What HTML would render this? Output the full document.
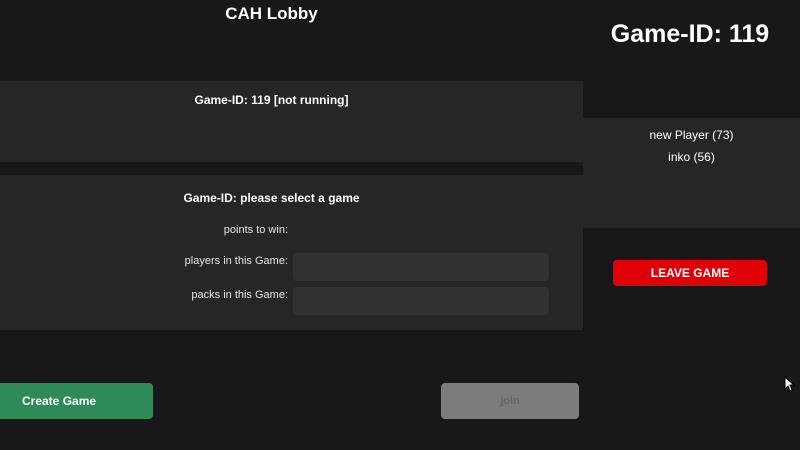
<!DOCTYPE html>
<html><head><meta charset="utf-8"><style>
*{margin:0;padding:0;box-sizing:border-box}
body{width:800px;height:450px;background:#18171a;font-family:"Liberation Sans",sans-serif;color:#fff;position:relative;overflow:hidden}
.a{position:absolute}
.p{background:#262528}
.lbl{position:absolute;font-size:11px;color:#e6e6e6;text-align:right;width:200px}
.in{position:absolute;left:293px;width:256px;height:28px;background:#323134;border-radius:4px}
</style></head><body>
<div class="a" style="left:0;width:543px;top:4px;text-align:center;font-weight:bold;font-size:17px">CAH Lobby</div>
<div class="a" style="left:580px;width:220px;top:20px;text-align:center;font-weight:bold;font-size:25px">Game-ID: 119</div>
<div class="a p" style="left:0;top:81px;width:583px;height:81px"></div>
<div class="a" style="left:0;width:543px;top:93px;text-align:center;font-weight:bold;font-size:12px">Game-ID: 119 [not running]</div>
<div class="a p" style="left:0;top:175px;width:583px;height:155px"></div>
<div class="a" style="left:0;width:543px;top:191px;text-align:center;font-weight:bold;font-size:12px">Game-ID: please select a game</div>
<div class="lbl" style="left:88px;top:224px">points to win:</div>
<div class="lbl" style="left:88px;top:255px">players in this Game:</div>
<div class="lbl" style="left:88px;top:289px">packs in this Game:</div>
<div class="in" style="top:253px"></div>
<div class="in" style="top:287px"></div>
<div class="a p" style="left:583px;top:118px;width:217px;height:110px"></div>
<div class="a" style="left:583px;width:217px;top:124px;text-align:center;font-size:12px;line-height:22px">new Player (73)<br>inko (56)</div>
<div class="a" style="left:613px;top:260px;width:154px;height:26px;background:#e00008;border-radius:4px;text-align:center;font-weight:bold;font-size:12px;line-height:26px">LEAVE GAME</div>
<div class="a" style="left:0;top:383px;width:153px;height:36px;background:#2e8a58;border-radius:0 4px 4px 0;font-weight:bold;font-size:12px;line-height:36px;padding-left:22px">Create Game</div>
<div class="a" style="left:441px;top:383px;width:138px;height:36px;background:#7c7b7e;border-radius:4px;text-align:center;font-weight:bold;font-size:11px;line-height:36px;color:#666">join</div>
<svg class="a" style="left:784px;top:376px" width="12" height="16" viewBox="0 0 12 16"><path d="M1 1 L1 13 L4 10 L6 15 L8 14 L6 9 L10 9 Z" fill="#fff" stroke="#000" stroke-width="1"/></svg>
</body></html>
